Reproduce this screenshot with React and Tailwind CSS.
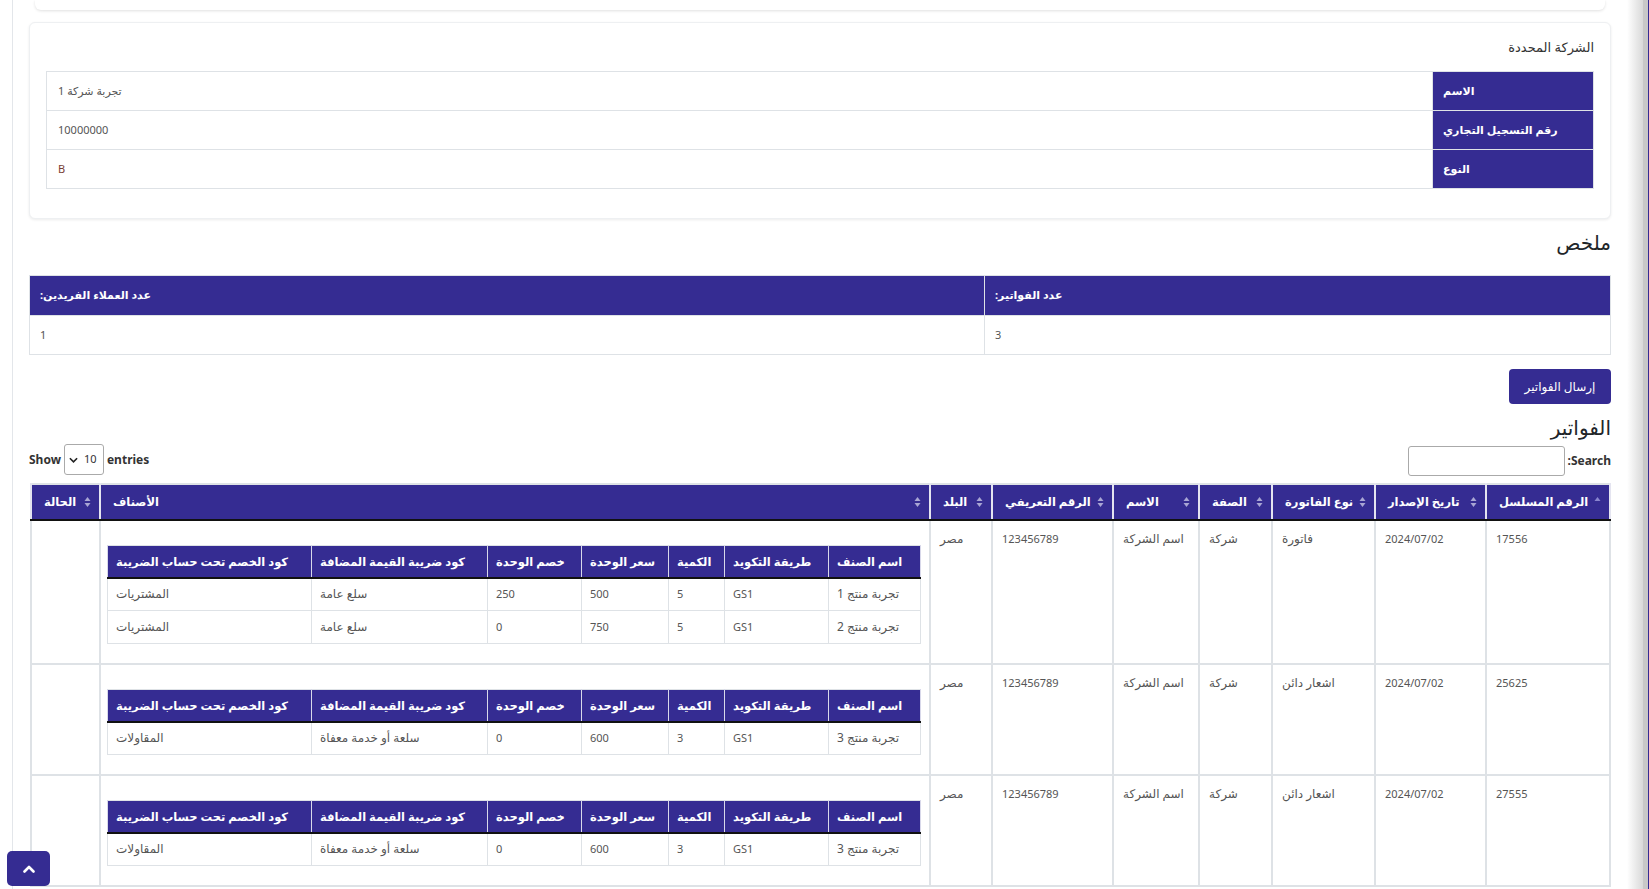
import React from 'react'

const PURPLE = 'bg-[#352c92]'

const invoices = [
  {
    serial: '17556',
    date: '2024/07/02',
    type: 'فاتورة',
    role: 'شركة',
    name: 'اسم الشركة',
    taxId: '123456789',
    country: 'مصر',
    items: [
      ['تجربة منتج 1', 'GS1', '5', '500', '250', 'سلع عامة', 'المشتريات'],
      ['تجربة منتج 2', 'GS1', '5', '750', '0', 'سلع عامة', 'المشتريات'],
    ],
  },
  {
    serial: '25625',
    date: '2024/07/02',
    type: 'اشعار دائن',
    role: 'شركة',
    name: 'اسم الشركة',
    taxId: '123456789',
    country: 'مصر',
    items: [['تجربة منتج 3', 'GS1', '3', '600', '0', 'سلعة أو خدمة معفاة', 'المقاولات']],
  },
  {
    serial: '27555',
    date: '2024/07/02',
    type: 'اشعار دائن',
    role: 'شركة',
    name: 'اسم الشركة',
    taxId: '123456789',
    country: 'مصر',
    items: [['تجربة منتج 3', 'GS1', '3', '600', '0', 'سلعة أو خدمة معفاة', 'المقاولات']],
  },
]

const itemHeads = ['اسم الصنف', 'طريقة التكويد', 'الكمية', 'سعر الوحدة', 'خصم الوحدة', 'كود ضريبة القيمة المضافة', 'كود الخصم تحت حساب الضريبة']

const isArabic = (s) => /[\u0600-\u06FF]/.test(s)

// sort arrows as DataTables draws them
const SortIcon = ({ asc }) => (
  <svg viewBox="0 0 7 12" className="h-[12px] w-[7px] shrink-0">
    <path d="M0.5 5 L3.5 1 L6.5 5 Z" fill={asc ? '#8a86cf' : '#a9a6d4'} />
    {!asc && <path d="M0.5 7 L3.5 11 L6.5 7 Z" fill="#a9a6d4" />}
  </svg>
)

const ItemsTable = ({ rows }) => (
  <table className="mb-[11px] mt-[16px] w-[813px] table-fixed border-collapse border border-[#dee2e6]">
    <colgroup>
      <col className="w-[92px]" />
      <col className="w-[104px]" />
      <col className="w-[56px]" />
      <col className="w-[87px]" />
      <col className="w-[94px]" />
      <col className="w-[176px]" />
      <col className="w-[204px]" />
    </colgroup>
    <thead>
      <tr className={PURPLE}>
        {itemHeads.map((h) => (
          <th key={h} className="h-[32px] whitespace-nowrap border-x border-b-2 border-x-[#d8d8ea] border-b-[#111] px-2 text-left text-[11.5px] font-bold text-white">
            {h}
          </th>
        ))}
      </tr>
    </thead>
    <tbody>
      {rows.map((r, i) => (
        <tr key={i}>
          {r.map((c, j) => (
            <td key={j} className={`h-[33px] whitespace-nowrap border border-[#dee2e6] px-2 text-left text-[#555] ${isArabic(c) ? 'text-[12px]' : 'text-[11px]'}`}>
              {c}
            </td>
          ))}
        </tr>
      ))}
    </tbody>
  </table>
)

const mainHeads = [
  ['الرقم المسلسل', 'w-[124px]'],
  ['تاريخ الإصدار', 'w-[111px]'],
  ['نوع الفاتورة', 'w-[103px]'],
  ['الصفة', 'w-[73px]'],
  ['الاسم', 'w-[86px]'],
  ['الرقم التعريفي', 'w-[121px]'],
  ['البلد', 'w-[62px]'],
  ['الأصناف', 'w-[830px]'],
  ['الحالة', 'w-[69px]'],
]

const Cell = ({ children }) => (
  <td
    className={`whitespace-nowrap border-2 border-[#dee2e6] px-[9px] py-2 align-top text-left leading-[20px] text-[#555] ${
      children && isArabic(children) ? 'text-[12px]' : 'text-[11px]'
    }`}
  >
    {children}
  </td>
)

export default function App() {
  return (
    <div className="flex h-[889px] w-full overflow-hidden bg-white font-['Noto_Sans','DejaVu_Sans',sans-serif]">
      <main dir="rtl" className="ml-[12px] flex-1 border-l border-[#e3e6ea] px-4">
        {/* tail of the card above */}
        <div className="mx-[6px] h-[10px] rounded-b-md bg-white shadow-[0_1px_3px_rgba(0,0,0,0.12)]" />

        {/* selected company */}
        <section className="mt-[12px] rounded-md border border-[#eef0f2] bg-white px-4 pb-[29px] pt-[13px] shadow-[0_1px_3px_rgba(0,0,0,0.08)]">
          <h3 className="text-[13px] leading-[22px] text-[#333]">الشركة المحددة</h3>
          <table className="mt-[13px] w-full table-fixed border-collapse border border-[#dee2e6]">
            <colgroup>
              <col className="w-[161px]" />
              <col />
            </colgroup>
            <tbody>
              {[
                ['الاسم', 'تجربة شركة 1', 'text-[#555]'],
                ['رقم التسجيل التجاري', '10000000', 'text-[#555]'],
                ['النوع', 'B', 'text-[#7a3e35]'],
              ].map(([k, v, c]) => (
                <tr key={k}>
                  <th className={`${PURPLE} h-[39px] whitespace-nowrap border border-[#dee2e6] px-[10px] text-left text-[11px] font-bold text-white`}>{k}</th>
                  <td className={`h-[39px] border border-[#dee2e6] px-[11px] text-left text-[11px] ${c}`}>{v}</td>
                </tr>
              ))}
            </tbody>
          </table>
        </section>

        <h2 className="mt-[12px] text-[20px] font-medium leading-[24px] text-[#212529]">ملخص</h2>

        <table className="mt-[20px] w-full table-fixed border-collapse border border-[#dee2e6]">
          <colgroup>
            <col className="w-[626px]" />
            <col />
          </colgroup>
          <thead>
            <tr className={PURPLE}>
              <th className="h-[40px] border border-[#dee2e6] px-[10px] text-left text-[11px] font-bold text-white">عدد الفواتير:</th>
              <th className="h-[40px] border border-[#dee2e6] px-[10px] text-left text-[11px] font-bold text-white">عدد العملاء الفريدين:</th>
            </tr>
          </thead>
          <tbody>
            <tr>
              <td className="h-[39px] border border-[#dee2e6] px-[10px] text-left text-[11px] text-[#555]">3</td>
              <td className="h-[39px] border border-[#dee2e6] px-[10px] text-left text-[11px] text-[#555]">1</td>
            </tr>
          </tbody>
        </table>

        <div className="mt-[14px] flex">
          <button className={`${PURPLE} h-[35px] w-[102px] rounded-[4px] text-[12px] text-white`}>إرسال الفواتير</button>
        </div>

        <h2 className="mt-[12px] text-[20px] font-medium leading-[24px] text-[#212529]">الفواتير</h2>

        <div className="mt-[6px] flex h-[37px] items-start justify-between">
          <label className="flex items-center gap-[3px] text-[12px] font-bold text-[#333]">
            Search:
            <span className="h-[30px] w-[157px] rounded-[3px] border border-[#aaa] bg-white" />
          </label>
          <div dir="ltr" className="-mt-[2px] flex items-center gap-[3px] text-[12px] font-bold text-[#333]">
            <span>Show</span>
            <span className="flex h-[31px] w-[40px] items-center gap-[6px] rounded-[3px] border border-[#aaa] bg-white pl-[4px] text-[11px] font-normal">
              <svg viewBox="0 0 10 6" className="h-[6px] w-[9px]">
                <path d="M1 1 L5 5 L9 1" fill="none" stroke="#222" strokeWidth="1.8" />
              </svg>
              10
            </span>
            <span>entries</span>
          </div>
        </div>

        {/* invoices table */}
        <table className="ml-px w-[1579px] table-fixed border-collapse border-2 border-[#dee2e6]">
          <colgroup>
            {mainHeads.map(([h, w]) => (
              <col key={h} className={w} />
            ))}
          </colgroup>
          <thead>
            <tr className={PURPLE}>
              {mainHeads.map(([h], i) => (
                <th key={h} className="h-[36px] whitespace-nowrap border-x-2 border-b-2 border-x-[#e4e4f0] border-b-[#111] pl-3 pr-2 text-left text-[11.5px] font-bold text-white">
                  <div className="flex items-center justify-between gap-1">
                    <SortIcon asc={i === 0} />
                    <span>{h}</span>
                  </div>
                </th>
              ))}
            </tr>
          </thead>
          <tbody>
            {invoices.map((inv) => (
              <tr key={inv.serial}>
                <Cell>{inv.serial}</Cell>
                <Cell>{inv.date}</Cell>
                <Cell>{inv.type}</Cell>
                <Cell>{inv.role}</Cell>
                <Cell>{inv.name}</Cell>
                <Cell>{inv.taxId}</Cell>
                <Cell>{inv.country}</Cell>
                <td className="border-2 border-[#dee2e6] p-2 align-top">
                  <ItemsTable rows={inv.items} />
                </td>
                <Cell />
              </tr>
            ))}
          </tbody>
        </table>
      </main>

      {/* right edge strip */}
      <aside className="flex w-[23px] shrink-0">
        <div className="w-[16px] bg-gradient-to-r from-white to-[#d9d9d9]" />
        <div className="w-[5px] bg-[#c8c8c8]" />
        <div className={`w-[2px] ${PURPLE}`} />
      </aside>

      <button className={`${PURPLE} fixed bottom-[3px] left-[7px] flex h-[35px] w-[43px] items-center justify-center rounded-[5px]`}>
        <svg viewBox="0 0 12 8" className="h-[8px] w-[12px]">
          <path d="M1.5 6.5 L6 2 L10.5 6.5" fill="none" stroke="white" strokeWidth="2.6" strokeLinecap="round" strokeLinejoin="round" />
        </svg>
      </button>
    </div>
  )
}
